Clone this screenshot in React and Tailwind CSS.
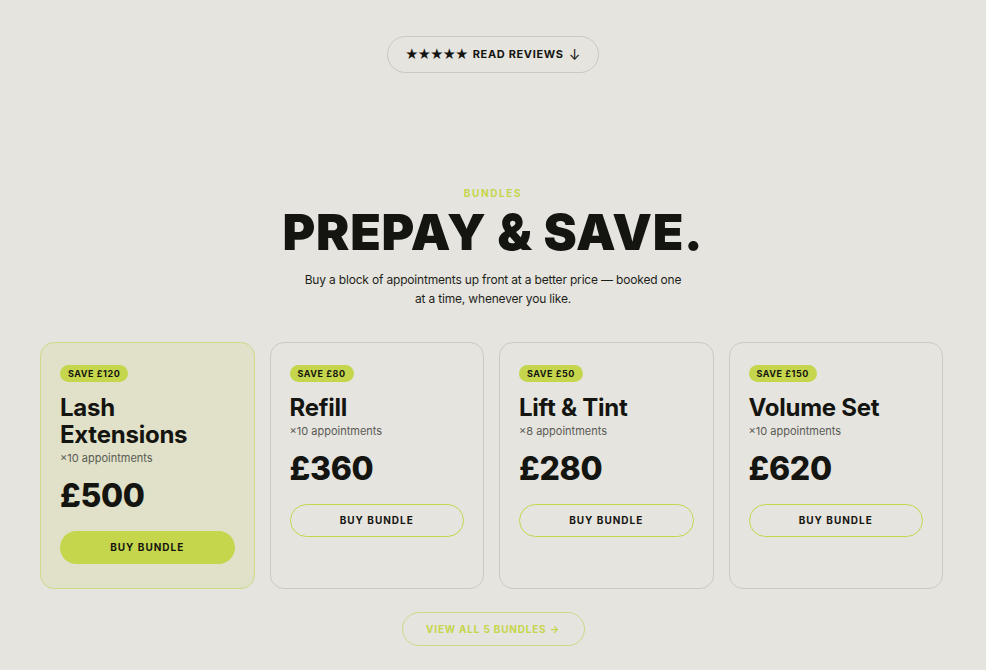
import React from "react";

const bundles = [
  { save: "SAVE £120", name: "Lash Extensions", count: "×10 appointments", price: "£500", featured: true },
  { save: "SAVE £80", name: "Refill", count: "×10 appointments", price: "£360" },
  { save: "SAVE £50", name: "Lift & Tint", count: "×8 appointments", price: "£280" },
  { save: "SAVE £150", name: "Volume Set", count: "×10 appointments", price: "£620" },
];

export default function App() {
  return (
    <div className="min-h-[670px] w-full bg-[#e5e4df] text-[#141410]" style={{ fontFamily: "Inter, 'Liberation Sans', sans-serif" }}>
      <div className="flex justify-center pt-[36px]">
        <button className="flex h-[37px] w-[212px] items-center justify-center gap-[5px] rounded-full border border-[#c9c8c2] text-[11px] font-bold tracking-[0.06em] text-[#141410]">
          <span className="text-[13px] tracking-[-0.08em]">★★★★★</span>
          <span>READ REVIEWS</span>
          <span className="text-[14px] font-normal">↓</span>
        </button>
      </div>

      <div className="mt-[113px] flex flex-col items-center">
        <div className="text-[10px] font-bold leading-[14px] tracking-[0.16em] text-[#c5d64c]">BUNDLES</div>
        <h1 className="mt-[6px] text-[50px] font-black leading-[52px] tracking-[0.015em] text-[#141410]">PREPAY &amp; SAVE.</h1>
        <p className="mt-[12px] w-[390px] text-center text-[12px] leading-[19px] tracking-[-0.015em] text-[#1f1f1a]">
          Buy a block of appointments up front at a better price — booked one at a time, whenever you like.
        </p>
      </div>

      <div className="ml-[40px] mt-[34px] grid w-[903px] grid-cols-4 gap-[15px]">
        {bundles.map((b) => (
          <div
            key={b.name}
            className={
              b.featured
                ? "flex h-[247px] flex-col rounded-[14px] border border-[#cfd98a] bg-[#e0e1c8] px-[19px] pt-[22px]"
                : "flex h-[247px] flex-col rounded-[14px] border border-[#cac9c3] px-[19px] pt-[22px]"
            }
          >
            <div className="self-start rounded-full bg-[#c5d64c] px-[8px] text-[9px] font-bold leading-[17px] tracking-[0.06em] text-[#141410]">
              {b.save}
            </div>
            <div className="mt-[12px] pr-[20px] text-[24px] font-bold leading-[27px] tracking-[-0.01em]">{b.name}</div>
            <div className="mt-[2px] text-[11px] leading-[16px] text-[#5a5a55]">{b.count}</div>
            <div className="mt-[10px] text-[32px] font-extrabold leading-[40px] tracking-[-0.01em]">{b.price}</div>
            <button
              className={
                b.featured
                  ? "mt-[15px] h-[33px] w-full rounded-full bg-[#c5d64c] text-[10px] font-bold tracking-[0.1em] text-[#141410]"
                  : "mt-[15px] h-[33px] w-full rounded-full border border-[#c5d64c] text-[10px] font-bold tracking-[0.1em] text-[#141410]"
              }
            >
              BUY BUNDLE
            </button>
          </div>
        ))}
      </div>

      <div className="mt-[23px] flex justify-center pb-[24px]">
        <button className="h-[34px] w-[183px] rounded-full border border-[#cfd98a] text-[10px] font-bold tracking-[0.08em] text-[#c5d64c]">
          VIEW ALL 5 BUNDLES →
        </button>
      </div>
    </div>
  );
}
